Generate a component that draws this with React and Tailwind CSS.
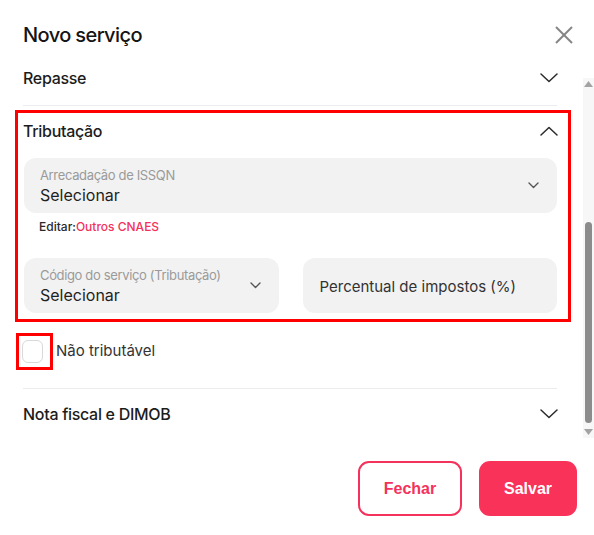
import React from 'react';

function Chevron({ up = false, className = '' }) {
  return (
    <svg width="18" height="10" viewBox="0 0 18 10" className={className} fill="none">
      <polyline
        points={up ? '1,9 9,1.5 17,9' : '1,1 9,8.5 17,1'}
        stroke="#2b2b2b"
        strokeWidth="1.5"
        strokeLinecap="round"
        strokeLinejoin="round"
      />
    </svg>
  );
}

function SmallChevron() {
  return (
    <svg width="11" height="7" viewBox="0 0 11 7" fill="none">
      <polyline points="1,1 5.5,5.5 10,1" stroke="#555" strokeWidth="1.4" strokeLinecap="round" strokeLinejoin="round" />
    </svg>
  );
}

function SelectField({ label, className = '' }) {
  return (
    <div className={`h-[55px] rounded-[12px] bg-[#f2f2f2] flex items-center justify-between pl-[16px] pr-[18px] ${className}`}>
      <div className="flex flex-col">
        <span className="text-[13px] leading-[16px] text-[#9a9a9a] tracking-[-0.35px]">{label}</span>
        <span className="text-[16px] leading-[20px] text-[#1f1f1f] mt-[2px]">Selecionar</span>
      </div>
      <SmallChevron />
    </div>
  );
}

export default function App() {
  return (
    <div className="w-[594px] h-[535px] bg-white flex flex-col overflow-hidden font-['Inter',sans-serif]">
      {/* header */}
      <div className="h-[71px] shrink-0 flex items-start justify-between pl-[23px] pr-[20px] pt-[22px]">
        <h2 className="text-[20px] leading-[26px] font-medium text-[#141414] tracking-[-0.6px]">Novo serviço</h2>
        <svg width="20" height="20" viewBox="0 0 20 20" className="mt-[3px]">
          <line x1="2" y1="2" x2="18" y2="18" stroke="#858585" strokeWidth="2" />
          <line x1="18" y1="2" x2="2" y2="18" stroke="#858585" strokeWidth="2" />
        </svg>
      </div>

      {/* body */}
      <div className="h-[369px] shrink-0 flex">
        <div className="flex-1 overflow-hidden">
          <div className="-mt-[15px]">
            <div className="mx-[23px] w-[534px] h-[44px] flex items-center justify-between">
              <span className="text-[16px] font-medium text-[#1c1c1c] tracking-[-0.3px]">Repasse</span>
              <Chevron className="mr-[-1px]" />
            </div>
            <div className="mx-[23px] w-[534px] h-px bg-[#ececec] mt-[5px]" />

            <div className="ml-[15px] w-[556px] mt-[4px] border-[3px] border-[#ff0000] pl-[6px] pr-[11px] pt-[8px] pb-[6px]">
              <div className="h-[20px] flex items-center justify-between">
                <span className="text-[16px] font-medium text-[#1c1c1c] tracking-[-0.3px] -ml-[1px]">Tributação</span>
                <Chevron up className="mr-[-1px]" />
              </div>
              <SelectField label="Arrecadação de ISSQN" className="mt-[17px]" />
              <div className="mt-[7px] pl-[15px] h-[14px] text-[12px] leading-[14px] font-medium">
                <span className="text-[#2a2a2a]">Editar:</span>
                <span className="text-[#f4325c]">Outros CNAES</span>
              </div>
              <div className="mt-[24px] grid grid-cols-2 gap-[24px]">
                <SelectField label="Código do serviço (Tributação)" />
                <div className="h-[55px] rounded-[12px] bg-[#f2f2f2] flex items-center pl-[17px]">
                  <span className="text-[15px] text-[#333333] mt-[4px]">Percentual de impostos (%)</span>
                </div>
              </div>
            </div>

            <div className="mt-[11px] flex items-center">
              <div className="ml-[16px] w-[37px] h-[37px] border-[3px] border-[#ff0000] flex items-center justify-center">
                <div className="w-[21px] h-[23px] rounded-[6px] border border-[#d9d9d9] bg-white -ml-[5px]" />
              </div>
              <span className="ml-[3px] text-[15px] text-[#333333]">Não tributável</span>
            </div>

            <div className="mx-[23px] w-[534px] h-px bg-[#ececec] mt-[18px]" />
            <div className="mx-[23px] w-[534px] h-[50px] flex items-center justify-between">
              <span className="text-[16px] font-medium text-[#1c1c1c] tracking-[-0.3px]">Nota fiscal e DIMOB</span>
              <Chevron className="mr-[-1px]" />
            </div>
          </div>
        </div>

        {/* scrollbar */}
        <div className="w-[11px] mt-[7px] h-[360px] bg-[#f7f7f7] flex flex-col items-center">
          <svg width="9" height="6" viewBox="0 0 9 6" className="mt-[3px]">
            <polygon points="4.5,0 9,6 0,6" fill="#a3a3a3" />
          </svg>
          <div className="w-[7px] h-[201px] mt-[135px] rounded-full bg-[#8c8c8c]" />
          <svg width="9" height="6" viewBox="0 0 9 6" className="mt-[6px]">
            <polygon points="0,0 9,0 4.5,6" fill="#a3a3a3" />
          </svg>
        </div>
      </div>

      {/* footer */}
      <div className="flex justify-end gap-[17px] pr-[17px] pt-[21px]">
        <button className="w-[104px] h-[55px] rounded-[11px] border-2 border-[#f4325c] bg-white text-[#f4325c] text-[16px] font-bold font-['Liberation_Sans',sans-serif]">
          Fechar
        </button>
        <button className="w-[98px] h-[55px] rounded-[11px] bg-[#f9325a] text-white text-[16px] font-bold font-['Liberation_Sans',sans-serif]">
          Salvar
        </button>
      </div>
    </div>
  );
}
